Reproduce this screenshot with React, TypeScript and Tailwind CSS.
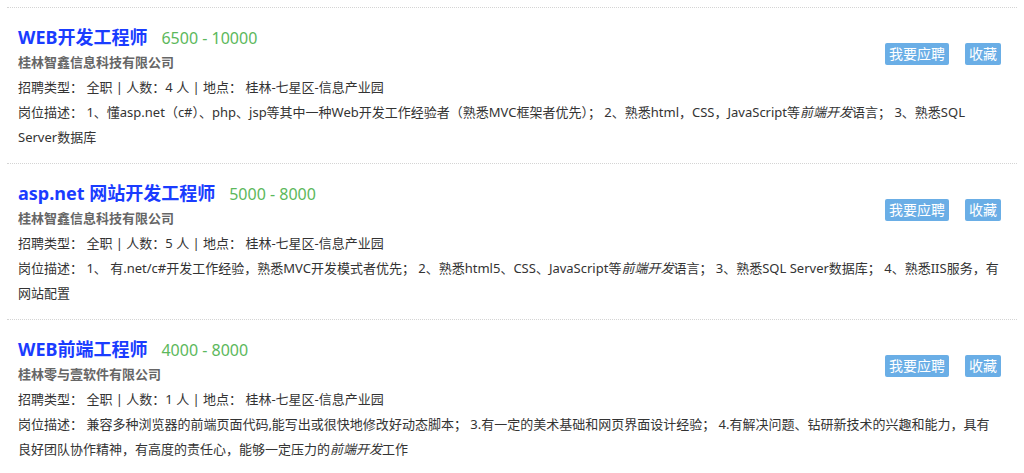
const jobs = [
  {
    id: 1,
    title: 'WEB开发工程师',
    salary: '6500 - 10000',
    company: '桂林智鑫信息科技有限公司',
    count: 4,
    desc: [
      '1、懂asp.net（c#）、php、jsp等其中一种Web开发工作经验者（熟悉MVC框架者优先）； 2、熟悉html，CSS，JavaScript等',
      '语言； 3、熟悉SQL Server数据库',
    ],
  },
  {
    id: 2,
    title: 'asp.net 网站开发工程师',
    salary: '5000 - 8000',
    company: '桂林智鑫信息科技有限公司',
    count: 5,
    desc: [
      '1、 有.net/c#开发工作经验，熟悉MVC开发模式者优先； 2、熟悉html5、CSS、JavaScript等',
      '语言； 3、熟悉SQL Server数据库； 4、熟悉IIS服务，有网站配置',
    ],
  },
  {
    id: 3,
    title: 'WEB前端工程师',
    salary: '4000 - 8000',
    company: '桂林零与壹软件有限公司',
    count: 1,
    desc: [
      '兼容多种浏览器的前端页面代码,能写出或很快地修改好动态脚本； 3.有一定的美术基础和网页界面设计经验； 4.有解决问题、钻研新技术的兴趣和能力，具有良好团队协作精神，有高度的责任心，能够一定压力的',
      '工作',
    ],
  },
];

export default function App() {
  return (
    <div
      className="min-h-screen bg-white px-[7px] pt-[7px] text-[13px] leading-[25px] text-[#333]"
      style={{ fontFamily: '"Noto Sans", "Noto Sans CJK SC", sans-serif' }}
    >
      <ul>
        {jobs.map((job) => (
          <JobItem key={job.id} job={job} />
        ))}
      </ul>
    </div>
  );
}

function JobItem({ job }: { job: (typeof jobs)[number] }) {
  return (
    <li className="border-t border-dotted border-[#d4d4d4] pl-[11px] pr-[8px] pt-[17px] pb-[13px]">
      <div className="flex items-start justify-between">
        <div>
          {/* Title + salary */}
          <div className="flex h-[25px] items-baseline">
            <a href="#" className="text-[18px] font-bold text-[#1a3cff]">
              {job.title}
            </a>
            <span className="ml-[14px] text-[16px] text-[#5cb85c]">{job.salary}</span>
          </div>
          <div className="font-bold text-[#666]">{job.company}</div>
          <div>
            招聘类型： 全职 | 人数：{job.count} 人 | 地点： 桂林-七星区-信息产业园
          </div>
        </div>

        {/* Actions */}
        <div className="mt-[18px] mr-[8px] flex gap-[16px]">
          <button className="h-[22px] rounded-[2px] bg-[#6aaee6] px-[4px] text-[14px] leading-[22px] text-white">
            我要应聘
          </button>
          <button className="h-[22px] rounded-[2px] bg-[#6aaee6] px-[4px] text-[14px] leading-[22px] text-white">
            收藏
          </button>
        </div>
      </div>

      <p className="pr-[10px]">
        岗位描述： {job.desc[0]}
        <em>前端开发</em>
        {job.desc[1]}
      </p>
    </li>
  );
}
